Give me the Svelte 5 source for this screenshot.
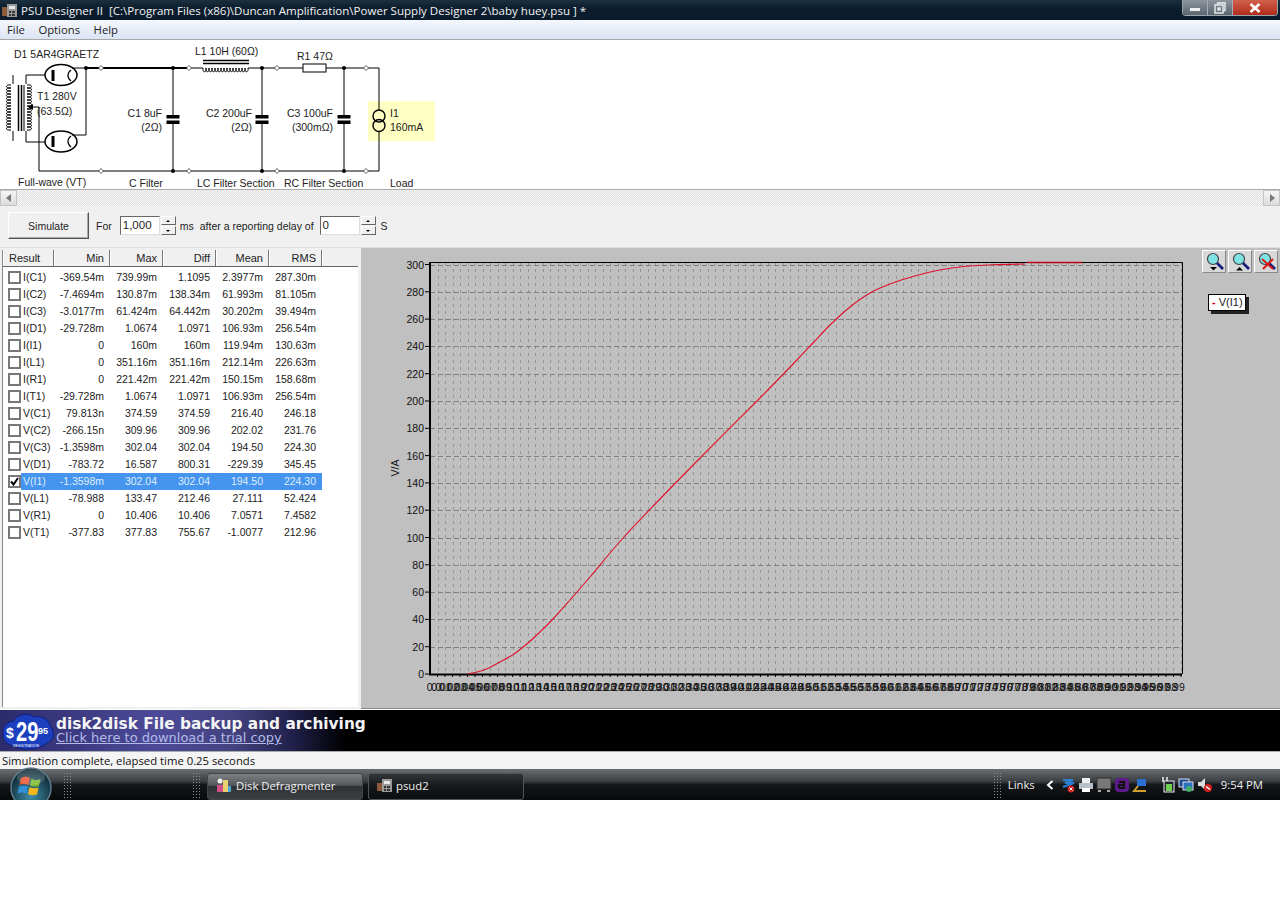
<script>
	// results table, values as read from the window
	const rows = [
		['I(C1)', '-369.54m', '739.99m', '1.1095', '2.3977m', '287.30m'],
		['I(C2)', '-7.4694m', '130.87m', '138.34m', '61.993m', '81.105m'],
		['I(C3)', '-3.0177m', '61.424m', '64.442m', '30.202m', '39.494m'],
		['I(D1)', '-29.728m', '1.0674', '1.0971', '106.93m', '256.54m'],
		['I(I1)', '0', '160m', '160m', '119.94m', '130.63m'],
		['I(L1)', '0', '351.16m', '351.16m', '212.14m', '226.63m'],
		['I(R1)', '0', '221.42m', '221.42m', '150.15m', '158.68m'],
		['I(T1)', '-29.728m', '1.0674', '1.0971', '106.93m', '256.54m'],
		['V(C1)', '79.813n', '374.59', '374.59', '216.40', '246.18'],
		['V(C2)', '-266.15n', '309.96', '309.96', '202.02', '231.76'],
		['V(C3)', '-1.3598m', '302.04', '302.04', '194.50', '224.30'],
		['V(D1)', '-783.72', '16.587', '800.31', '-229.39', '345.45'],
		['V(I1)', '-1.3598m', '302.04', '302.04', '194.50', '224.30'],
		['V(L1)', '-78.988', '133.47', '212.46', '27.111', '52.424'],
		['V(R1)', '0', '10.406', '10.406', '7.0571', '7.4582'],
		['V(T1)', '-377.83', '377.83', '755.67', '-1.0077', '212.96']
	];
	const heads = ['Min', 'Max', 'Diff', 'Mean', 'RMS'];

	// chart geometry
	const left = 430, right = 1182, top = 262, bottom = 674;
	const yOf = (v) => 674 - v * 1.365;
	const yTicks = Array.from({ length: 16 }, (_, i) => i * 20);
	const xGrid = Array.from({ length: 100 }, (_, i) => left + (i + 1) * 7.51).filter((x) => x < right);
	const xLabels = Array.from({ length: 100 }, (_, i) => (i === 0 ? '0.0' : (i / 100).toFixed(2)));

	const curve = [
		[468, 674], [484, 670], [500, 662], [514, 654], [528, 643], [540, 632], [553, 619],
		[570, 600], [590, 577], [623, 538], [660, 499], [700, 458], [757, 401], [795, 362], [813, 343],
		[830, 325], [850, 307], [870, 293], [890, 284], [913, 276.500], [937, 270.500], [960, 267], [993, 264.800], [1025, 264]
	];
	// catmull-rom through the read points
	const smooth = (p) => {
		let d = `M${p[0][0]} ${p[0][1]}`;
		for (let i = 0; i < p.length - 1; i++) {
			const a = p[i - 1] || p[i], b = p[i], c = p[i + 1], e = p[i + 2] || c;
			d += `C${b[0] + (c[0] - a[0]) / 6} ${b[1] + (c[1] - a[1]) / 6} ${c[0] - (e[0] - b[0]) / 6} ${c[1] - (e[1] - b[1]) / 6} ${c[0]} ${c[1]}`;
		}
		return d;
	};

	// schematic bits
	const joints = [173, 262, 344];
	const nodes = [101, 189, 277, 366];
	const vCoil = (x, y0, n, dir) => {
		let d = `M${x} ${y0}`;
		for (let i = 0; i < n; i++) d += `c${dir * 6} -1 ${dir * 6} 4 0 3`;
		return d;
	};
	const hCoil = (x0, y, n) => {
		let d = `M${x0} ${y}`;
		for (let i = 0; i < n; i++) d += `c-1 5 4 5 3 0`;
		return d;
	};
</script>

<div class="window">
	<header class="titlebar">
		<svg class="appicon" width="16" height="16" viewBox="0 0 16 16">
			<rect x="0" y="5" width="5" height="9" fill="#8a5a3a" />
			<rect x="5" y="2" width="10" height="13" fill="#9a9a9a" />
			<rect x="7" y="4" width="6" height="3" fill="#e8e8e8" />
			<path d="M7 9h2v2H7zM10 9h3v2h-3zM7 12h2v2H7zM10 12h3v2h-3z" fill="#333" />
		</svg>
		<span class="title">PSU Designer II&nbsp; [C:\Program Files (x86)\Duncan Amplification\Power Supply Designer 2\baby huey.psu ] *</span>
		<div class="winbtns">
			<div class="wb">
				<svg width="10" height="8" viewBox="0 0 10 8"><rect x="0" y="4" width="10" height="3" fill="#eee" /></svg>
			</div>
			<div class="wb">
				<svg width="12" height="12" viewBox="0 0 12 12" fill="none" stroke="#eee" stroke-width="1.4"><path d="M3.5 2.5V1h7.5v7.5H9.5" /><rect x="1" y="3" width="8" height="8" /><rect x="4" y="6" width="2" height="2" /></svg>
			</div>
			<div class="wb close">
				<svg width="12" height="10" viewBox="0 0 12 10" stroke="#fff" stroke-width="2.6"><path d="M1.5 1l9 8M10.5 1l-9 8" /></svg>
			</div>
		</div>
	</header>

	<nav class="menubar">
		<span>File</span>
		<span>Options</span>
		<span>Help</span>
	</nav>

	<section class="schematic">
		<svg class="circuit" width="440" height="149" viewBox="0 40 440 149">
			<rect x="368" y="101" width="67" height="40" fill="#ffffc4" />
			<g fill="none" stroke="#000" stroke-width="1">
				<path d="M86 68V135H72M86 68H72" />
				<path d="M86 68H187" stroke-width="2" />
				<path d="M191 68H203M248 68H275M279 68H303M326 68H364M368 68H379V110M379 132V171M39 171H99M103 171H187M191 171H275M279 171H364M368 171H379" />
				<path d="M39 171V107H29" />
				<path d="M26 84V75H45M26 131V142H45" />
				<path d="M13 84V75M13 131V141" />
				<ellipse cx="61" cy="75" rx="16" ry="10.5" stroke-width="1.5" />
				<ellipse cx="61" cy="141.5" rx="16" ry="10.5" stroke-width="1.5" />
				<path d="M71 70c-4 3-4 8 0 11M71 136c-4 3-4 8 0 11" stroke-width="1.2" />
				<path d={vCoil(11, 85, 15, -1)} />
				<path d={vCoil(27, 85, 15, 1)} />
				<path d={hCoil(203, 68, 15)} />
				<rect x="303" y="64" width="23" height="8" />
				{#each joints as x}
					<path d="M{x} 68V116M{x} 123V171" />
				{/each}
				<ellipse cx="379" cy="116" rx="6" ry="6" stroke-width="1.4" />
				<ellipse cx="379" cy="125.500" rx="6" ry="6" stroke-width="1.4" />
			</g>
			<path d="M18.5 85V131M21.5 85V131" stroke="#000" stroke-width="1.5" />
			<path d="M24 85V131" stroke="#000" stroke-width="1" />
			<path d="M203 60.5H249M203 63.5H249" stroke="#000" stroke-width="1.5" />
			<rect x="51.5" y="70" width="3" height="11" />
			<rect x="51.5" y="136" width="3" height="11" />
			<path d="M33 104l-5 3 5 3z" />
			{#each joints as x}
				<rect x={x - 6.5} y="115" width="13" height="3.500" />
				<rect x={x - 6.5} y="120.500" width="13" height="3.500" />
				<circle cx={x} cy="68" r="2" />
				<circle cx={x} cy="171" r="2" />
			{/each}
			<circle cx="86" cy="68" r="2" />
			{#each nodes as x}
				<path d="M{x - 2.5} 68l2.5-2.5 2.5 2.5-2.5 2.5z" fill="#fff" stroke="#333" stroke-width="0.8" />
				<path d="M{x - 2.5} 171l2.5-2.5 2.5 2.5-2.5 2.5z" fill="#fff" stroke="#333" stroke-width="0.8" />
			{/each}
			<g class="ctext">
				<text x="14" y="58">D1 5AR4GRAETZ</text>
				<text x="195" y="55">L1 10H (60Ω)</text>
				<text x="297" y="60">R1 47Ω</text>
				<text x="37" y="100">T1 280V</text>
				<text x="37" y="115">(63.5Ω)</text>
				<text x="162" y="117" text-anchor="end">C1 8uF</text>
				<text x="162" y="131" text-anchor="end">(2Ω)</text>
				<text x="252" y="117" text-anchor="end">C2 200uF</text>
				<text x="252" y="131" text-anchor="end">(2Ω)</text>
				<text x="333" y="117" text-anchor="end">C3 100uF</text>
				<text x="333" y="131" text-anchor="end">(300mΩ)</text>
				<text x="390" y="117">I1</text>
				<text x="390" y="131">160mA</text>
				<text x="18" y="186">Full-wave (VT)</text>
				<text x="129" y="187">C Filter</text>
				<text x="197" y="187">LC Filter Section</text>
				<text x="284" y="187">RC Filter Section</text>
				<text x="390" y="187">Load</text>
			</g>
		</svg>
	</section>

	<div class="hscroll">
		<div class="sb-end"><svg width="6" height="8" viewBox="0 0 6 8"><path d="M5 0L0 4l5 4z" fill="#777" /></svg></div>
		<div class="sb-track"></div>
		<div class="sb-end"><svg width="6" height="8" viewBox="0 0 6 8"><path d="M1 0l5 4-5 4z" fill="#777" /></svg></div>
	</div>

	<div class="toolbar">
		<button class="simulate">Simulate</button>
		<span class="for">For</span>
		<div class="spinbox"><span class="field">1,000</span><span class="spin"><i class="up"></i><i class="down"></i></span></div>
		<span class="ms">ms</span>
		<span class="after">after a reporting delay of</span>
		<div class="spinbox"><span class="field">0</span><span class="spin"><i class="up"></i><i class="down"></i></span></div>
		<span class="secs">S</span>
	</div>

	<main class="content">
		<div class="listpane">
			<div class="listbox">
				<div class="thead">
					<div class="th first">Result</div>
					{#each heads as h}
						<div class="th">{h}</div>
					{/each}
					<div class="th filler"></div>
				</div>
				{#each rows as r, i}
					<div class="row" class:selected={i === 12}>
						<span class="check">
							{#if i === 12}
								<svg width="9" height="9" viewBox="0 0 9 9"><path d="M1 4.5l2.5 3L8 1" fill="none" stroke="#000" stroke-width="2" /></svg>
							{/if}
						</span>
						<div class="cells">
							<span class="name">{r[0]}</span>
							{#each r.slice(1) as v}
								<span class="num">{v}</span>
							{/each}
						</div>
					</div>
				{/each}
			</div>
		</div>

		<div class="chart">
			<svg class="plot" width="919" height="460" viewBox="361 248 919 460">
				<g stroke="#939393" stroke-width="1" stroke-dasharray="3 4">
					{#each xGrid as x}
						<line x1={Math.round(x) + 0.5} x2={Math.round(x) + 0.5} y1={top} y2={bottom} />
					{/each}
				</g>
				<g stroke="#808080" stroke-width="1" stroke-dasharray="5 3">
					{#each yTicks as v}
						<line x1={left} x2={right} y1={Math.round(yOf(v)) + 0.5} y2={Math.round(yOf(v)) + 0.5} />
					{/each}
				</g>
				<path d="M{left} {top + 0.5}H{right + 0.5}V{bottom}" fill="none" stroke="#000" stroke-width="1" />
				<path d="M{left} {top}V{bottom + 0.5}H{right}" fill="none" stroke="#000" stroke-width="2" />
				<path d={smooth(curve)} fill="none" stroke="#e0102c" stroke-width="1.1" />
				<path d="M1027 262.500H1082" stroke="#c00018" stroke-width="1.500" />
				<g stroke="#000" stroke-width="1">
					{#each yTicks as v}
						<line x1={left - 5} x2={left} y1={yOf(v)} y2={yOf(v)} />
					{/each}
					{#each xGrid as x}
						<line x1={x} x2={x} y1={bottom} y2={bottom + 3} />
					{/each}
				</g>
				<g class="tick">
					{#each yTicks as v}
						<text x="424" y={yOf(v) + 4} text-anchor="end">{v}</text>
					{/each}
					{#each xLabels as t, i}
						<text x={434 + i * 7.48} y="691" text-anchor="middle">{t}</text>
					{/each}
					<text transform="translate(399 468) rotate(-90)" text-anchor="middle">V/A</text>
				</g>
			</svg>

			<div class="zoombtns">
				<button aria-label="Zoom in">
					<svg width="20" height="20" viewBox="0 0 20 20"><circle cx="8" cy="7" r="5.5" fill="#7fe3e3" stroke="#444" stroke-width="1.2" /><path d="M12 11l6 6" stroke="#141a78" stroke-width="2.6" /><path d="M5 15h7l-3.5 3.5z" /></svg>
				</button>
				<button aria-label="Zoom out">
					<svg width="20" height="20" viewBox="0 0 20 20"><circle cx="8" cy="7" r="5.5" fill="#7fe3e3" stroke="#444" stroke-width="1.2" /><path d="M12 11l6 6" stroke="#141a78" stroke-width="2.6" /><path d="M5 18.5h7L8.5 15z" /></svg>
				</button>
				<button aria-label="Reset zoom">
					<svg width="20" height="20" viewBox="0 0 20 20"><circle cx="8" cy="7" r="5.5" fill="#7fe3e3" stroke="#444" stroke-width="1.2" /><path d="M12 11l6 6" stroke="#141a78" stroke-width="2.6" /><path d="M5 7l11 10M16 7L6 17" stroke="#e01818" stroke-width="2" /></svg>
				</button>
			</div>

			<div class="legend"><b>-</b> V(I1)</div>
		</div>
	</main>

	<div class="ad">
		<svg class="badge" width="56" height="41" viewBox="0 0 56 41">
			<path d="M3 24C2 15 9 11 14 11 17 4 28 2 34 7 41 5 50 10 50 16 55 20 55 30 47 33 40 40 22 41 14 36 7 35 3 31 3 24z" fill="#1c3fc0" stroke="#0d1f78" stroke-width="1" />
			<text x="6" y="28" class="b-d">$</text>
			<text transform="translate(16 31) scale(0.72 1)" class="b-n">29</text>
			<text x="38" y="24" class="b-c">95</text>
			<text x="13" y="37" class="b-r">REGISTRATION</text>
		</svg>
		<div class="adtext">
			<div class="adhead">disk2disk File backup and archiving</div>
			<div class="adlink">Click here to download a trial copy</div>
		</div>
	</div>

	<div class="status">Simulation complete, elapsed time 0.25 seconds</div>

	<footer class="taskbar">
		<svg class="orb" width="42" height="33" viewBox="0 0 42 33">
			<defs>
				<radialGradient id="orbfill" cx="50%" cy="70%" r="65%">
					<stop offset="0" stop-color="#3f8fa8" />
					<stop offset="1" stop-color="#0c2430" />
				</radialGradient>
			</defs>
			<circle cx="21" cy="21" r="20" fill="url(#orbfill)" stroke="#5f7a88" stroke-width="1.5" />
			<g transform="translate(0 -3)">
				<path d="M11 14c3-2 6-2 9 0l-1.5 7c-3-1.5-6-1.5-9 0z" fill="#e8502a" />
				<path d="M21.5 14.500c3 2 6 2 9 .5l-1.500 7c-3 1-6 1-9-.5z" fill="#7cb82e" />
				<path d="M9 22.500c3-1.500 6-1.500 9 0l-1.500 7c-3-1.500-6-1.500-9 0z" fill="#2f8fd8" />
				<path d="M19.500 23c3 1.500 6 1.500 9 .5l-1.500 7c-3 1-6 1-9-.5z" fill="#f4b81e" />
			</g>
			<ellipse cx="21" cy="10" rx="14" ry="8" fill="#fff" opacity="0.18" />
		</svg>
		<div class="grip first"></div>
		<div class="grip second"></div>
		<div class="task active">
			<svg width="16" height="16" viewBox="0 0 16 16"><rect x="1" y="8" width="6" height="7" fill="#d0508a" /><rect x="7" y="3" width="5" height="12" fill="#e8d070" /><rect x="12" y="9" width="3" height="6" fill="#50a8d8" /><circle cx="4" cy="4" r="2.500" fill="#f0f0f0" /></svg>
			<span>Disk Defragmenter</span>
		</div>
		<div class="task">
			<svg width="16" height="16" viewBox="0 0 16 16"><rect x="0" y="6" width="5" height="8" fill="#8a5a3a" /><rect x="5" y="2" width="10" height="13" fill="#9a9a9a" /><rect x="7" y="4" width="6" height="3" fill="#e8e8e8" /><path d="M7 9h2v2H7zM10 9h3v2h-3zM7 12h2v2H7zM10 12h3v2h-3z" fill="#333" /></svg>
			<span>psud2</span>
		</div>
		<div class="tray">
			<div class="grip"></div>
			<span class="links">Links</span>
			<svg class="chev" width="8" height="10" viewBox="0 0 8 10"><path d="M6.500 1L2 5l4.500 4" fill="none" stroke="#fff" stroke-width="2" /></svg>
			<div class="quick">
				<svg width="16" height="16" viewBox="0 0 16 16"><path d="M3 3h10L5 6h9L3 10" fill="none" stroke="#2a80d0" stroke-width="2" /><circle cx="11" cy="12" r="3.500" fill="#d02020" /><path d="M9.500 10.500l3 3M12.500 10.500l-3 3" stroke="#fff" /></svg>
				<svg width="16" height="16" viewBox="0 0 16 16"><rect x="4" y="1" width="8" height="5" fill="#eee" /><rect x="1" y="6" width="14" height="6" fill="#b8c0c8" /><rect x="4" y="11" width="8" height="4" fill="#fff" /></svg>
				<svg width="16" height="16" viewBox="0 0 16 16"><rect x="1" y="1" width="14" height="11" fill="#777" stroke="#333" /><path d="M2 14h3M11 14h3" stroke="#aaa" stroke-width="2" /></svg>
				<svg width="16" height="16" viewBox="0 0 16 16"><rect x="1" y="1" width="14" height="14" rx="4" fill="#5c1a8a" /><path d="M5 5h5v6H6a2 2 0 0 1-1-3h5" fill="none" stroke="#111" stroke-width="2.200" /></svg>
				<svg width="16" height="16" viewBox="0 0 16 16"><rect x="5" y="2" width="9" height="7" fill="#2a70d0" /><path d="M6 9l-4 5h12" fill="none" stroke="#d0a030" stroke-width="2" /></svg>
			</div>
			<div class="systray">
				<svg width="14" height="16" viewBox="0 0 14 16"><rect x="3" y="4" width="10" height="11" fill="#223" stroke="#eee" /><rect x="5" y="7" width="6" height="7" fill="#70d050" /><path d="M2 0v5M6 0v4" stroke="#eee" stroke-width="1.500" /></svg>
				<svg width="16" height="16" viewBox="0 0 16 16"><rect x="1" y="2" width="10" height="8" fill="#1c4a90" stroke="#dde" /><rect x="5" y="5" width="10" height="8" fill="#2a70c0" stroke="#dde" /><circle cx="11" cy="12" r="3" fill="#40b060" /></svg>
				<svg width="16" height="16" viewBox="0 0 16 16"><path d="M1 5h3l4-4v12l-4-4H1z" fill="#ddd" /><circle cx="11" cy="11" r="4" fill="#d02020" /><path d="M9 9.500l4 3" stroke="#fff" stroke-width="1.500" /></svg>
			</div>
			<span class="clock">9:54 PM</span>
		</div>
	</footer>
</div>

<style>
	:global(body) {
		margin: 0;
		background: #fff;
	}
	.window {
		width: 1280px;
		height: 919px;
		font-family: 'Liberation Sans', Arial, sans-serif;
		font-size: 11px;
		color: #222;
		overflow: hidden;
	}
	.titlebar {
		height: 20px;
		display: flex;
		align-items: center;
		background: linear-gradient(#1c3040, #0c1e2e 40%, #0a1a2a);
		color: #f2f2f2;
		font-family: 'Open Sans', sans-serif;
		font-size: 11.550px;
	}
	.appicon {
		margin: 0 3px 0 2px;
		flex: none;
	}
	.title {
		white-space: nowrap;
	}
	.winbtns {
		display: flex;
		margin-left: auto;
		margin-right: 2px;
		align-self: flex-start;
		height: 15px;
		border: 1px solid #9aa4ac;
		border-top: 0;
		border-radius: 0 0 4px 4px;
		overflow: hidden;
	}
	.wb {
		width: 24px;
		display: flex;
		align-items: center;
		justify-content: center;
		background: linear-gradient(#8c949c, #5c6670);
		border-right: 1px solid #aab;
	}
	.wb svg {
		display: block;
	}
	.wb.close {
		width: 44px;
		border-right: 0;
		background: linear-gradient(#d0604c, #b02c1c);
	}
	.menubar {
		height: 19px;
		display: flex;
		align-items: center;
		gap: 13.500px;
		padding-left: 7px;
		background: linear-gradient(#f4f7fc, #dce4f4);
		border-bottom: 1px solid #a8a8a8;
		font-family: 'Open Sans', sans-serif;
		font-size: 11.300px;
		color: #222;
	}
	.schematic {
		height: 149px;
		background: #fff;
		overflow: hidden;
	}
	.circuit {
		display: block;
	}
	.ctext text {
		font-family: 'Liberation Sans', Arial, sans-serif;
		font-size: 10.500px;
		fill: #222;
	}
	.hscroll {
		height: 17px;
		display: flex;
		border-top: 1px solid #aaa;
		background: #eee;
		box-sizing: border-box;
	}
	.sb-end {
		width: 17px;
		display: flex;
		align-items: center;
		justify-content: center;
		background: linear-gradient(#f6f6f6, #dcdcdc);
		border: 1px solid #c4c4c4;
		box-sizing: border-box;
	}
	.sb-track {
		flex: 1;
		background: repeating-conic-gradient(#f4f4f4 0 25%, #e2e2e2 0 50%) 0 0 / 2px 2px;
	}
	.toolbar {
		height: 42px;
		box-sizing: border-box;
		display: flex;
		align-items: center;
		background: #f0f0f0;
		padding: 0 0 2px 8px;
		border-bottom: 1px solid #ddd;
		font-size: 10.500px;
	}
	.simulate {
		width: 81px;
		height: 27px;
		padding: 0;
		font: inherit;
		color: #222;
		background: #f0f0f0;
		border: 1px solid;
		border-color: #fff #555 #555 #fff;
		box-shadow: inset -1px -1px 0 #aaa;
	}
	.for {
		margin-left: 7px;
		margin-right: 8px;
	}
	.spinbox {
		display: flex;
		align-items: center;
	}
	.field {
		width: 40px;
		height: 19px;
		box-sizing: border-box;
		padding: 1px 2px;
		background: #fff;
		border: 1px solid;
		border-color: #666 #ddd #ddd #666;
		font-size: 11.500px;
		line-height: 15px;
	}
	.spin {
		width: 15px;
		height: 19px;
		margin-left: 1px;
		display: flex;
		flex-direction: column;
		gap: 1px;
	}
	.spin i {
		flex: 1;
		display: flex;
		align-items: center;
		justify-content: center;
		background: #f0f0f0;
		border: 1px solid;
		border-color: #fff #666 #666 #fff;
	}
	.spin i::after {
		content: '';
		border-left: 2px solid transparent;
		border-right: 2px solid transparent;
	}
	.spin .up::after {
		border-bottom: 2px solid #000;
	}
	.spin .down::after {
		border-top: 2px solid #000;
	}
	.ms {
		margin-left: 4px;
		margin-right: 6px;
	}
	.after {
		margin-right: 6px;
	}
	.secs {
		margin-left: 5px;
	}
	.content {
		height: 461px;
		display: flex;
		background: #f0f0f0;
	}
	.listpane {
		width: 361px;
		flex: none;
		box-sizing: border-box;
		padding: 2px 3px 2px 2px;
	}
	.listbox {
		height: 100%;
		box-sizing: border-box;
		background: #fff;
		border-left: 1px solid #888;
		font-size: 10.500px;
	}
	.thead {
		display: grid;
		grid-template-columns: 51px 56px 53px 53px 53px 53px 1fr;
		height: 17px;
		margin-bottom: 2px;
		background: #f0f0f0;
		border-bottom: 1px solid #666;
		box-sizing: border-box;
	}
	.th {
		text-align: right;
		padding-right: 5px;
		border-right: 1px solid #777;
		border-left: 1px solid #fff;
		line-height: 16px;
		font-size: 11px;
	}
	.th.first {
		text-align: left;
		padding-left: 5px;
	}
	.th.filler {
		border-right: 0;
	}
	.row {
		height: 17px;
		display: flex;
		align-items: center;
		padding-left: 5px;
	}
	.check {
		width: 13px;
		height: 13px;
		box-sizing: border-box;
		border: 2px solid #787878;
		background: #fff;
		display: flex;
		align-items: center;
		justify-content: center;
		flex: none;
	}
	.cells {
		height: 17px;
		display: grid;
		grid-template-columns: 33px 56px 53px 53px 53px 53px;
		align-items: center;
		line-height: 17px;
	}
	.name {
		padding-left: 2px;
	}
	.num {
		text-align: right;
		padding-right: 6px;
		white-space: nowrap;
	}
	.row.selected .cells {
		background: #4595ee;
		color: #dfeeff;
	}
	.chart {
		flex: 1;
		position: relative;
		background: #c0c0c0;
		border-bottom: 1px solid #888;
	}
	.plot {
		display: block;
	}
	.tick text {
		font-family: 'Liberation Sans', Arial, sans-serif;
		font-size: 10.500px;
		fill: #111;
	}
	.zoombtns {
		position: absolute;
		top: 2px;
		right: 2px;
		display: flex;
		gap: 2px;
	}
	.zoombtns button {
		width: 24px;
		height: 23px;
		padding: 1px 0 0 2px;
		background: #d8d8d8;
		border: 1px solid;
		border-color: #fff #888 #888 #fff;
	}
	.zoombtns svg {
		display: block;
	}
	.legend {
		position: absolute;
		left: 847px;
		top: 46px;
		width: 38px;
		height: 17px;
		box-sizing: border-box;
		padding-left: 3px;
		line-height: 15px;
		background: #fff;
		border: 1px solid #000;
		box-shadow: 3px 3px 0 #222;
		white-space: nowrap;
	}
	.legend b {
		color: #d00;
		font-weight: bold;
	}
	.ad {
		height: 42px;
		display: flex;
		align-items: center;
		background: linear-gradient(90deg, #2c2c6c, #4c4a98 45%, #44427e 68%, #20204a 85%, #000 100%) 0 0 / 345px 100% no-repeat #000;
		border-top: 1px solid #fff;
		box-sizing: border-box;
	}
	.badge {
		flex: none;
		display: block;
	}
	.b-d {
		font-family: 'Liberation Sans', sans-serif;
		font-weight: bold;
		font-size: 14px;
		fill: #fff;
	}
	.b-n {
		font-family: 'Liberation Sans', sans-serif;
		font-weight: bold;
		font-size: 28px;
		fill: #fff;
	}
	.b-c {
		font-family: 'Liberation Sans', sans-serif;
		font-weight: bold;
		font-size: 9px;
		fill: #fff;
	}
	.b-r {
		font-family: 'Liberation Sans', sans-serif;
		font-size: 3.500px;
		fill: #fff;
	}
	.adtext {
		font-family: 'DejaVu Sans', sans-serif;
		white-space: nowrap;
	}
	.adhead {
		color: #f4f4f4;
		font-weight: bold;
		font-size: 15.350px;
		line-height: 16px;
		margin-bottom: -1px;
	}
	.adlink {
		color: #b4bcea;
		font-size: 13px;
		line-height: 14px;
		text-decoration: underline;
	}
	.status {
		height: 18px;
		box-sizing: border-box;
		padding-left: 2px;
		border-top: 1px solid #aaa;
		background: #f4f4f4;
		font-family: 'Open Sans', sans-serif;
		font-size: 11.300px;
		line-height: 17px;
		color: #111;
		white-space: nowrap;
	}
	.taskbar {
		position: relative;
		height: 31px;
		display: flex;
		align-items: center;
		background: linear-gradient(#6a6e70 0, #3a3e42 40%, #15181b 50%, #060809 100%);
		color: #f0f0f0;
		font-family: 'Open Sans', sans-serif;
		font-size: 11.300px;
	}
	.orb {
		position: absolute;
		left: 10px;
		top: -2px;
	}
	.grip {
		width: 8px;
		height: 26px;
		flex: none;
		background: radial-gradient(circle, #8c9094 0.700px, transparent 1px) 0 0 / 3px 3px;
	}
	.grip.first {
		margin-left: 63px;
	}
	.grip.second {
		margin-left: 121px;
	}
	.task {
		height: 27px;
		width: 156px;
		align-self: flex-end;
		box-sizing: border-box;
		display: flex;
		align-items: center;
		gap: 3px;
		padding: 0 0 3px 8px;
		margin-left: 5px;
		border: 1px solid #555;
		border-radius: 3px;
		background: linear-gradient(#333638, #15181a 50%, #0c0e10);
	}
	.task.active {
		margin-left: 7px;
		background: linear-gradient(#7c8084, #55595c 45%, #303336 50%, #3c3f42);
		border-color: #444;
	}
	.task.active svg {
		margin-right: 1px;
	}
	.tray {
		margin-left: auto;
		display: flex;
		align-items: center;
		padding-right: 17px;
	}
	.links {
		margin-left: 7px;
	}
	.chev {
		margin-left: 11px;
	}
	.quick {
		margin-left: 6px;
		display: flex;
		gap: 2px;
	}
	.systray {
		margin-left: 13px;
		display: flex;
		gap: 3px;
	}
	.clock {
		margin-left: 8px;
	}
</style>
